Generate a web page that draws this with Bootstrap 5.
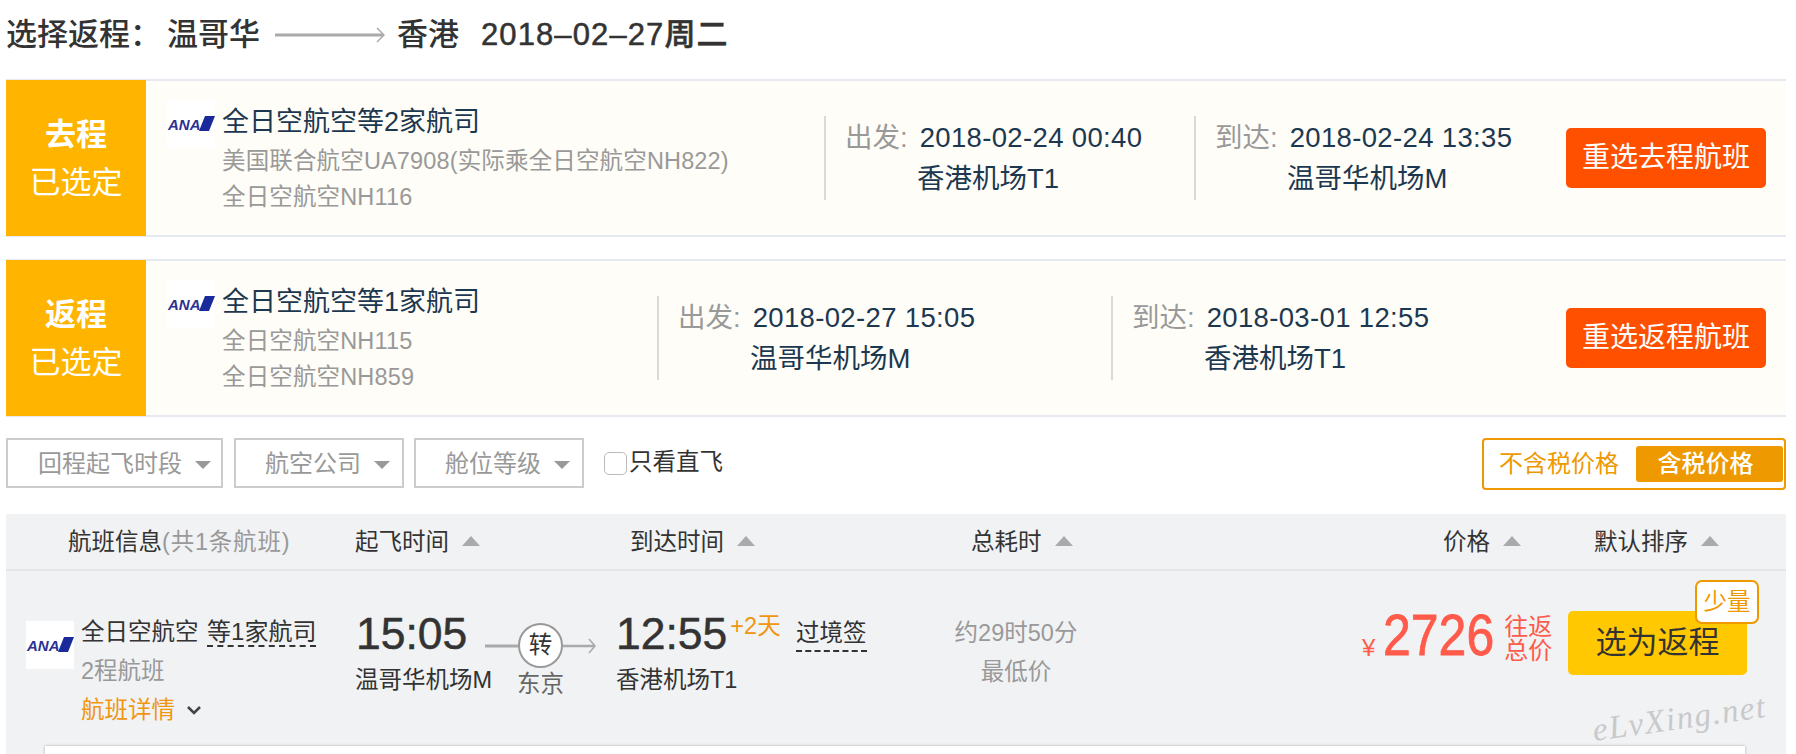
<!DOCTYPE html>
<html lang="zh-CN">
<head>
<meta charset="UTF-8">
<title>选择返程</title>
<link href="https://cdn.jsdelivr.net/npm/bootstrap@5.3.3/dist/css/bootstrap.min.css" rel="stylesheet">
<style>
  html, body { height: 754px; overflow: hidden; }
  body { font-family: "Liberation Sans", "Noto Sans CJK SC", sans-serif; background: #fff; color: #333; }
  .page-wrap { position: relative; padding: 0 10px 0 6px; height: 754px; overflow: hidden; }

  .route-title { height: 79px; padding-bottom: 9px; font-size: 31px; font-weight: 500; color: #333; white-space: nowrap; }
  .route-title .route-from { margin-left: 6px; }
  .route-title svg { margin: 0 12px 0 15px; }
  .route-title .route-date { margin-left: 22px; letter-spacing: 1.1px; -webkit-text-stroke: .5px #333; }

  .picked-band { height: 158px; background: #fffdf7; border-top: 2px solid #e6eaf0; border-bottom: 2px solid #e6eaf0; margin-bottom: 22px; }
  .picked-tag { width: 140px; background: #ffb400; color: #fff; text-align: center; font-size: 31px; line-height: 48px; padding-top: 31px; margin-top: -1px; margin-bottom: -1px; }
  .picked-tag b { display: block; }
  .carrier-col { padding: 19px 0 0 21px; }
  .carrier-col.go { width: 678px; }
  .carrier-col.back { width: 511px; }
  .air-logo { width: 48px; height: 48px; flex: none; background: #fff; }
  .carrier-text { margin-left: 7px; padding-top: 2px; }
  .carrier-name { font-size: 27px; line-height: 41px; color: #1c3850; }
  .carrier-sub { font-size: 23.5px; line-height: 36px; color: #999; white-space: nowrap; letter-spacing: .15px; }
  .time-col { margin-top: 35px; height: 84px; border-left: 2px solid #d9d9d6; padding-left: 19px; font-size: 27.5px; color: #1c3850; line-height: 43px; white-space: nowrap; letter-spacing: .35px; }
  .time-col.w-go { width: 370px; }
  .time-col.w-back { width: 454px; }
  .time-col .time-label { color: #999; margin-right: 12px; letter-spacing: 0; }
  .time-col .time-port { padding-left: 72px; letter-spacing: 0; line-height: 40px; }
  .repick-btn { width: 200px; height: 60px; margin: 47px 20px 0 auto; background: #ff5000; border: 0; border-radius: 5px; color: #fff; font-size: 28px; padding: 0; --bs-btn-hover-bg: #ff5000; --bs-btn-hover-color: #fff; }

  .filter-bar { height: 52px; margin-top: -1px; }
  .filter-btn { height: 50px; border: 2px solid #ccc; border-radius: 0; background: #fff; color: #999; font-size: 24px; line-height: 48px; padding: 0; text-align: left; white-space: nowrap; }
  .filter-btn.dropdown-toggle::after { border-top: 8px solid #999; border-left: 8px solid transparent; border-right: 8px solid transparent; border-bottom: 0; vertical-align: 3px; margin-left: 13px; }
  .filter-btn.f-wide { width: 217px; padding-left: 30px; margin-right: 11px; }
  .filter-btn.f-air { width: 170px; padding-left: 29px; margin-right: 10px; }
  .filter-btn.f-cabin { width: 170px; padding-left: 29px; margin-right: 20px; }
  .direct-check .form-check-input { width: 23px; height: 23px; margin: 0 2px 0 0; border-radius: 5px; border-color: #bbb; }
  .direct-check { height: 50px; font-size: 23.5px; color: #333; white-space: nowrap; }
  .tax-switch { width: 304px; height: 52px; border: 2px solid #ee9900; border-radius: 4px; padding: 2px 1px; color: #ee9900; font-size: 24px; }
  .tax-off { padding-left: 14px; width: 151px; white-space: nowrap; }
  .tax-on { width: 147px; background: #ee9900; color: #fff; border-radius: 3px; text-align: center; padding-right: 8px; font-weight: 500; }

  .result-box { margin-top: 24px; background: #f1f2f4; height: 240px; }
  .result-head { height: 57px; border-bottom: 2px solid #e4e5e7; padding-left: 62px; font-size: 23.5px; line-height: 57px; color: #333; white-space: nowrap; }
  .result-head .gray-note { color: #999; letter-spacing: .8px; }
  .sort-up { display: inline-block; width: 0; height: 0; border-left: 9px solid transparent; border-right: 9px solid transparent; border-bottom: 10px solid #aaa; margin-left: 13px; vertical-align: 4px; }
  .h-info { width: 287px; } .h-dep { width: 275px; } .h-arr { width: 341px; } .h-dur { width: 472px; } .h-price { width: 151px; }

  .flight-row { height: 175px; white-space: nowrap; }
  .f-info { width: 349px; padding: 41px 0 0 20px; font-size: 23.5px; line-height: 39px; }
  .f-info .air-logo { margin-top: 9px; }
  .f-info .info-text { margin-left: 7px; }
  .dash-link { border-bottom: 2px dashed #333; font-size: 24px; margin-left: 2px; }
  .f-info .gray-line { color: #999; }
  .detail-link { color: #f09610; }
  .detail-link svg { margin-left: 11px; vertical-align: 2px; }
  .f-dep { width: 130px; padding-top: 38px; }
  .big-time { font-size: 44.5px; line-height: 50px; color: #333; -webkit-text-stroke: .5px #333; }
  .f-dep .big-time { padding-left: 1px; }
  .port-name { font-size: 23.5px; line-height: 42px; color: #333; }
  .f-stop { width: 111px; margin-right: 20px; padding-top: 52px; text-align: center; }
  .stop-circle { width: 45px; height: 45px; flex: none; border: 2px solid #999; border-radius: 50%; background: #fff; font-size: 23.5px; line-height: 41px; text-align: center; color: #333; }
  .stop-city { font-size: 23.5px; line-height: 30px; margin-top: 1px; color: #666; }
  .f-arr { width: 180px; padding-top: 38px; }
  .plus-day { font-size: 23.5px; line-height: 34px; color: #f09610; margin-left: 3px; }
  .f-visa { width: 150px; padding-top: 45px; font-size: 23.5px; }
  .f-visa span { display: inline-block; line-height: 34px; border-bottom: 2px dashed #333; }
  .f-dur { width: 140px; padding-top: 43px; text-align: center; font-size: 23.5px; line-height: 39px; color: #999; }
  .f-price { margin-left: 276px; width: 206px; padding-top: 36px; color: #ff5a4a; }
  .yen-mark { font-size: 24px; width: 21px; padding-top: 26px; line-height: 30px; }
  .price-num { font-size: 50px; line-height: 68px; -webkit-text-stroke: .7px #ff5a4a; transform: scaleY(1.15); }
  .price-note { font-size: 24px; line-height: 24px; margin-left: 10px; padding-top: 8px; }
  .pick-wrap { position: relative; margin-top: 40px; width: 179px; height: 64px; }
  .pick-btn { width: 179px; height: 64px; background: #ffc800; border: 0; border-radius: 5px; font-size: 31px; color: #333; padding: 0; --bs-btn-hover-bg: #ffc800; }
  .few-left { position: absolute; left: 127px; top: -31px; width: 64px; height: 44px; background: #fff; border: 2px solid #ee9900; border-radius: 7px; color: #ee9900; font-size: 23.5px; line-height: 40px; text-align: center; }
  .detail-card { margin: 0 41px 0 39px; height: 10px; background: #fff; box-shadow: 0 0 3px rgba(0,0,0,.3); }
  .site-mark { position: absolute; left: 1592px; top: 694px; font-family: "Liberation Serif", serif; font-style: italic; font-size: 33px; letter-spacing: 1.5px; color: #c8c9cb; transform: rotate(-8deg); white-space: nowrap; }
</style>
</head>
<body>
<div class="page-wrap">
  <div class="route-title d-flex align-items-center">
    <span>选择返程：</span><span class="route-from">温哥华</span>
    <svg width="110" height="18" viewBox="0 0 110 18"><path d="M0 9H108" stroke="#aaa" stroke-width="3" fill="none"/><path d="M102 2l7 7-7 7" stroke="#aaa" stroke-width="1.5" fill="none"/></svg>
    <span>香港</span><span class="route-date">2018–02–27周二</span>
  </div>

  <div class="picked-band d-flex">
    <div class="picked-tag"><b>去程</b>已选定</div>
    <div class="carrier-col go d-flex">
      <svg class="air-logo" viewBox="0 0 48 48"><text x="1" y="30" font-family="Liberation Sans" font-weight="700" font-style="italic" font-size="15" fill="#2d3192">ANA</text><polygon points="38,16 48,16 42,31 32,31" fill="#1a2a9a"/></svg>
      <div class="carrier-text">
        <div class="carrier-name">全日空航空等2家航司</div>
        <div class="carrier-sub">美国联合航空UA7908(实际乘全日空航空NH822)</div>
        <div class="carrier-sub">全日空航空NH116</div>
      </div>
    </div>
    <div class="time-col w-go">
      <div><span class="time-label">出发:</span>2018-02-24 00:40</div>
      <div class="time-port">香港机场T1</div>
    </div>
    <div class="time-col">
      <div><span class="time-label">到达:</span>2018-02-24 13:35</div>
      <div class="time-port">温哥华机场M</div>
    </div>
    <button class="btn repick-btn" type="button">重选去程航班</button>
  </div>

  <div class="picked-band d-flex">
    <div class="picked-tag"><b>返程</b>已选定</div>
    <div class="carrier-col back d-flex">
      <svg class="air-logo" viewBox="0 0 48 48"><text x="1" y="30" font-family="Liberation Sans" font-weight="700" font-style="italic" font-size="15" fill="#2d3192">ANA</text><polygon points="38,16 48,16 42,31 32,31" fill="#1a2a9a"/></svg>
      <div class="carrier-text">
        <div class="carrier-name">全日空航空等1家航司</div>
        <div class="carrier-sub">全日空航空NH115</div>
        <div class="carrier-sub">全日空航空NH859</div>
      </div>
    </div>
    <div class="time-col w-back">
      <div><span class="time-label">出发:</span>2018-02-27 15:05</div>
      <div class="time-port">温哥华机场M</div>
    </div>
    <div class="time-col">
      <div><span class="time-label">到达:</span>2018-03-01 12:55</div>
      <div class="time-port">香港机场T1</div>
    </div>
    <button class="btn repick-btn" type="button">重选返程航班</button>
  </div>

  <div class="filter-bar d-flex align-items-start">
    <button class="btn filter-btn f-wide dropdown-toggle" type="button">回程起飞时段</button>
    <button class="btn filter-btn f-air dropdown-toggle" type="button">航空公司</button>
    <button class="btn filter-btn f-cabin dropdown-toggle" type="button">舱位等级</button>
    <label class="direct-check d-flex align-items-center"><input class="form-check-input" type="checkbox">只看直飞</label>
    <div class="tax-switch d-flex align-items-center ms-auto">
      <span class="tax-off">不含税价格</span>
      <span class="tax-on">含税价格</span>
    </div>
  </div>

  <div class="result-box">
    <div class="result-head d-flex">
      <div class="h-info">航班信息<span class="gray-note">(共1条航班)</span></div>
      <div class="h-dep">起飞时间<i class="sort-up"></i></div>
      <div class="h-arr">到达时间<i class="sort-up"></i></div>
      <div class="h-dur">总耗时<i class="sort-up"></i></div>
      <div class="h-price">价格<i class="sort-up"></i></div>
      <div>默认排序<i class="sort-up"></i></div>
    </div>
    <div class="flight-row d-flex">
      <div class="f-info d-flex">
        <svg class="air-logo" viewBox="0 0 48 48"><text x="1" y="30" font-family="Liberation Sans" font-weight="700" font-style="italic" font-size="15" fill="#2d3192">ANA</text><polygon points="38,16 48,16 42,31 32,31" fill="#1a2a9a"/></svg>
        <div class="info-text">
          <div>全日空航空 <span class="dash-link">等1家航司</span></div>
          <div class="gray-line">2程航班</div>
          <div class="detail-link">航班详情<svg width="16" height="11" viewBox="0 0 16 11"><path d="M2 2l6 6 6-6" stroke="#444" stroke-width="2.6" fill="none"/></svg></div>
        </div>
      </div>
      <div class="f-dep">
        <div class="big-time">15:05</div>
        <div class="port-name">温哥华机场M</div>
      </div>
      <div class="f-stop">
        <div class="d-flex align-items-center">
          <svg width="33" height="6" viewBox="0 0 33 6"><path d="M0 3H33" stroke="#aaa" stroke-width="3"/></svg>
          <div class="stop-circle">转</div>
          <svg width="33" height="18" viewBox="0 0 33 18"><path d="M0 9H31" stroke="#aaa" stroke-width="2.5" fill="none"/><path d="M26 2l6 7-6 7" stroke="#aaa" stroke-width="1.6" fill="none"/></svg>
        </div>
        <div class="stop-city">东京</div>
      </div>
      <div class="f-arr">
        <div class="d-flex">
          <div class="big-time">12:55</div>
          <div class="plus-day">+2天</div>
        </div>
        <div class="port-name">香港机场T1</div>
      </div>
      <div class="f-visa"><span>过境签</span></div>
      <div class="f-dur">
        <div>约29时50分</div>
        <div>最低价</div>
      </div>
      <div class="f-price d-flex">
        <div class="yen-mark">¥</div>
        <div class="price-num">2726</div>
        <div class="price-note">往返<br>总价</div>
      </div>
      <div class="pick-wrap">
        <button class="btn pick-btn" type="button">选为返程</button>
        <div class="few-left">少量</div>
      </div>
    </div>
    <div class="detail-card"></div>
  </div>
  <div class="site-mark">eLvXing.net</div>
</div>
<script src="https://cdn.jsdelivr.net/npm/bootstrap@5.3.3/dist/js/bootstrap.bundle.min.js"></script>
</body>
</html>
